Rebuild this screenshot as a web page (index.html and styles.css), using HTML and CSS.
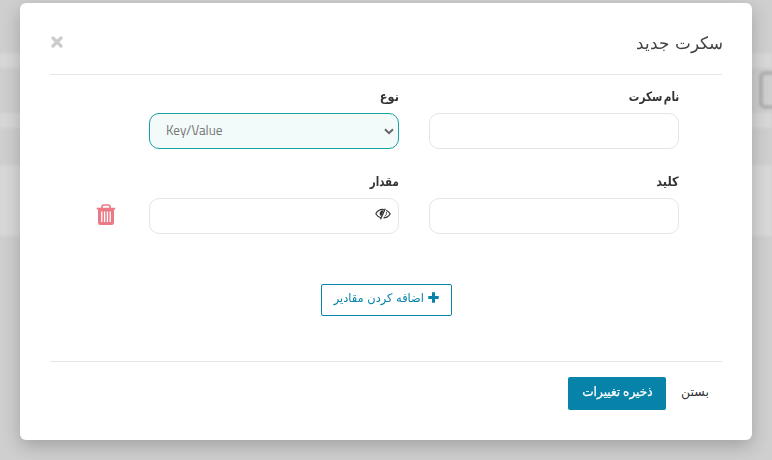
FILE: index.html
```
<!DOCTYPE html>
<html lang="fa" dir="rtl">
<head>
<meta charset="utf-8">
<title>سکرت جدید</title>
<link rel="stylesheet" href="styles.css">
</head>
<body>
<div class="backdrop" aria-hidden="true"><div class="band"></div><div class="band"></div><div class="band tall"></div><span class="ghost"></span></div>
<main class="modal">
  <header class="head">
    <h1><span class="fit title">سکرت جدید</span></h1>
    <button class="close" aria-label="بستن پنجره"><svg width="12" height="12" viewBox="0 0 12 12"><path d="M2 2l8 8M10 2L2 10" stroke="#ccc" stroke-width="3.2" stroke-linecap="round"/></svg></button>
  </header>
  <section class="fields">
    <div class="field">
      <label for="name"><span class="fit l-name">نام سکرت</span></label>
      <input id="name" class="control">
    </div>
    <div class="field">
      <label for="type"><span class="fit l-type">نوع</span></label>
      <div class="wrap">
        <select id="type" class="control select" dir="ltr"><option>Key/Value</option></select>
        <svg class="arrow" width="10" height="7" viewBox="0 0 10 7"><path d="M1 1.2l4 4 4-4" fill="none" stroke="#666" stroke-width="2"/></svg>
      </div>
    </div>
    <span></span>
    <div class="field">
      <label for="key"><span class="fit l-key">کلید</span></label>
      <input id="key" class="control">
    </div>
    <div class="field">
      <label for="value"><span class="fit l-value">مقدار</span></label>
      <div class="wrap">
        <input id="value" class="control">
        <svg class="eye" width="16" height="12" viewBox="0 0 16 12" fill="none" stroke="#333"><path d="M10.2.8L5.5 11.2" stroke-width="1.3"/><path d="M8.9 1.5C5.4 1 2.4 3 .8 5.7 2 7.8 3.8 9.2 5.9 9.7M11 2.3c1.8.7 3.2 2 4.2 3.6-1.6 2.5-4 4-6.7 4" stroke-width="1.1"/><path d="M8.6 2.3C6.1 2 4.4 3.9 4.7 6c.1 1.1.7 1.8 1.5 2.2z" fill="#333" stroke="none"/><path d="M11.4 4.1c.5 1.7-.3 3.4-1.9 4.2" stroke-width=".9"/></svg>
      </div>
    </div>
    <button class="trash" aria-label="حذف"><svg width="20" height="22" viewBox="0 0 20 22"><path d="M6 4V3Q6 1 8 1h4q2 0 2 2v1" fill="none" stroke="#ea7a86" stroke-width="1.7"/><path d="M.7 3.8h18.6v1.7H18v13.2q0 2.3-2.3 2.3H4.3Q2 21 2 18.700V5.500H.7z" fill="#ea7a86"/><path d="M5.800 7.500v10.500M8.600 7.500v10.500M11.400 7.500v10.500M14.200 7.500v10.500" stroke="#fff" stroke-width="1.300"/></svg></button>
  </section>
  <div class="more"><button class="add"><svg width="11" height="11" viewBox="0 0 11 11"><path d="M5.5.3v10.4M.3 5.5h10.4" stroke="#0783aa" stroke-width="3"/></svg><span class="fit l-add">اضافه کردن مقادیر</span></button></div>
  <footer class="foot">
    <button class="cancel"><span class="fit l-cancel">بستن</span></button>
    <button class="save"><span class="fit l-save">ذخیره تغییرات</span></button>
  </footer>
</main>
</body>
</html>
```
FILE: styles.css
```
* { box-sizing: border-box; }
body { margin: 0; height: 460px; overflow: hidden; padding: 3px 20px 20px; background: #cfcfcf; color: #333; font-family: "DejaVu Sans", sans-serif; }
button { border: 0; padding: 0; background: none; font: inherit; color: inherit; }
svg { display: block; }
.backdrop { position: absolute; inset: 0; padding-top: 53px; overflow: hidden; }
.band { height: 15px; margin-bottom: 45px; background: #d8d8d8; filter: blur(1.5px); }
.band + .band { margin-bottom: 37px; }
.band.tall { height: 71px; }
.ghost { position: absolute; left: 759px; top: 71px; width: 40px; height: 38px; border: 4px solid #b2b2b2; border-radius: 6px; filter: blur(1px); }
.modal { position: relative; height: 437px; padding: 0 30px; background: #fff; border-radius: 6px; box-shadow: 0 6px 18px rgba(0, 0, 0, .22); }
.head { display: flex; height: 72px; justify-content: space-between; align-items: center; border-bottom: 1px solid #e5e5e5; padding-top: 6px; }
h1 { margin: 0; padding-top: 3px; font-size: 17px; line-height: 24px; font-weight: 200; color: #444; }
.close { margin-left: 1px; }
.fields { display: grid; grid-template-columns: 250px 250px 23px; column-gap: 30px; row-gap: 13px; padding: 11px 43px 0 0; }
.field { height: 72px; display: flex; flex-direction: column; }
.field label { height: 24px; line-height: 21px; font-size: 13px; font-weight: bold; white-space: nowrap; }
.control { display: block; width: 250px; height: 36px; border: 1px solid #e4e4e4; border-radius: 10px; background: #fff; outline: 0; padding: 0 16px; }
.fields .control { margin-top: 3px; }
.wrap { position: relative; }
.select { appearance: none; background: #f2fafa; border-color: #17a2a2; color: #777; font: 13.3px/20px "Titillium Web", "Open Sans", sans-serif; padding-bottom: 3px; }
.arrow { position: absolute; right: 5px; top: 18px; }
.eye { position: absolute; right: 8px; top: 13px; }
.trash { justify-self: end; align-self: start; margin: 33px 0 0 0; }
.more { display: flex; justify-content: center; margin-top: 41px; }
.add { display: flex; align-items: center; gap: 4px; width: 131px; height: 32px; border: 1px solid #0783aa; border-radius: 2px; color: #0783aa; padding: 0 12px 5px 0; font-size: 12px; }
.foot { display: flex; align-items: flex-start; margin-top: 45px; border-top: 1px solid #e5e5e5; padding: 15px 13px 0 0; gap: 15px; }
.cancel, .save { height: 33px; font-size: 12.5px; padding-bottom: 5px; }
.cancel { width: 28px; }
.save { width: 98px; border-radius: 2px; background: #0783aa; color: #fff; display: flex; align-items: center; padding-right: 13px; -webkit-text-stroke: .25px #fff; }
.fit { display: inline-block; white-space: nowrap; transform-origin: right center; }
.title { transform: scaleX(.985); }
.l-name { word-spacing: -3px; transform: scaleX(.81); }
.l-type { transform: scaleX(.87); }
.l-key { transform: scaleX(.87); }
.l-value { transform: scaleX(.79); }
.l-add { transform: scaleX(.95); }
.l-save { word-spacing: -1px; transform: scaleX(.97); }
```
